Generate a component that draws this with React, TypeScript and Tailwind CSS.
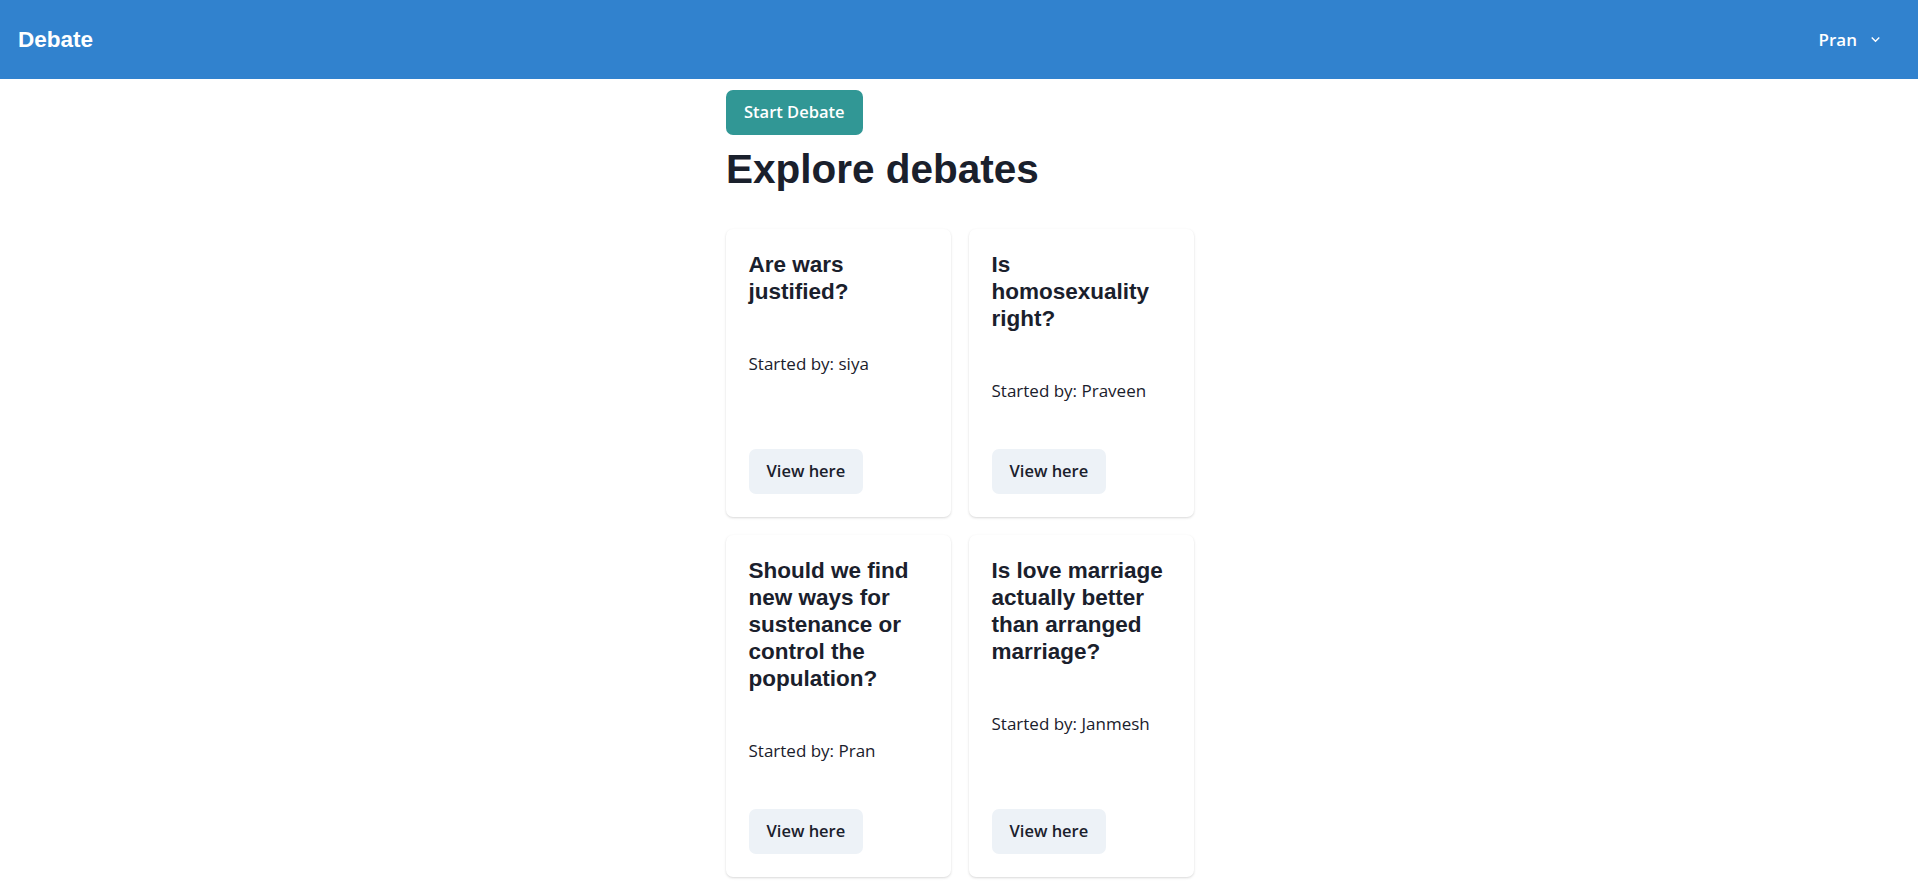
const debates = [
  { id: 1, title: 'Are wars justified?', author: 'siya' },
  { id: 2, title: 'Is homosexuality right?', author: 'Praveen' },
  { id: 3, title: 'Should we find new ways for sustenance or control the population?', author: 'Pran' },
  { id: 4, title: 'Is love marriage actually better than arranged marriage?', author: 'Janmesh' },
];

const bodyFont = "font-['Open_Sans',sans-serif]";
const headFont = "font-['Liberation_Sans',Arial,sans-serif]";

function ChevronDown() {
  return (
    <svg viewBox="0 0 24 24" className="h-[17px] w-[17px]" fill="currentColor" aria-hidden>
      <path d="M7.41 8.59L12 13.17l4.59-4.58L18 10l-6 6-6-6 1.41-1.41z" />
    </svg>
  );
}

export default function App() {
  return (
    <div className={`min-h-screen bg-white text-[#1a202c] ${bodyFont}`}>
      {/* Navbar */}
      <header className="flex h-[79px] items-center justify-between bg-[#3182ce] pr-[34px] pl-[18px] text-white">
        <h1 className={`${headFont} text-[22.5px] font-bold`}>Debate</h1>
        <button className="flex items-center gap-[10px] text-[17px] font-semibold">
          Pran
          <ChevronDown />
        </button>
      </header>

      {/* Content */}
      <div className="flex justify-center pl-[2px]">
        <main className="w-[468px]">
          <button className="mt-[11px] h-[45px] rounded-[7px] bg-[#319795] px-[18px] text-[16.5px] font-semibold text-white">
            Start Debate
          </button>
          <h2 className={`${headFont} mt-[10px] text-[40.5px] leading-[1.2] font-bold`}>
            Explore debates
          </h2>

          <div className="mt-[35px] grid grid-cols-2 gap-[18px] pb-[16px]">
            {debates.map((d) => (
              <div
                key={d.id}
                className="flex flex-col rounded-[7px] bg-white shadow-[0_1px_3px_0_rgba(0,0,0,0.1),0_1px_2px_0_rgba(0,0,0,0.06)]"
              >
                <div className="p-[22.5px]">
                  <h3 className={`${headFont} text-[22.5px] leading-[27px] font-bold`}>{d.title}</h3>
                </div>
                <div className="flex-1 p-[22.5px]">
                  <p className="text-[17px] leading-[27px]">Started by: {d.author}</p>
                </div>
                <div className="p-[22.5px]">
                  <button className="h-[45px] rounded-[7px] bg-[#edf2f7] px-[18px] text-[16.5px] font-semibold">
                    View here
                  </button>
                </div>
              </div>
            ))}
          </div>
        </main>
      </div>
    </div>
  );
}
